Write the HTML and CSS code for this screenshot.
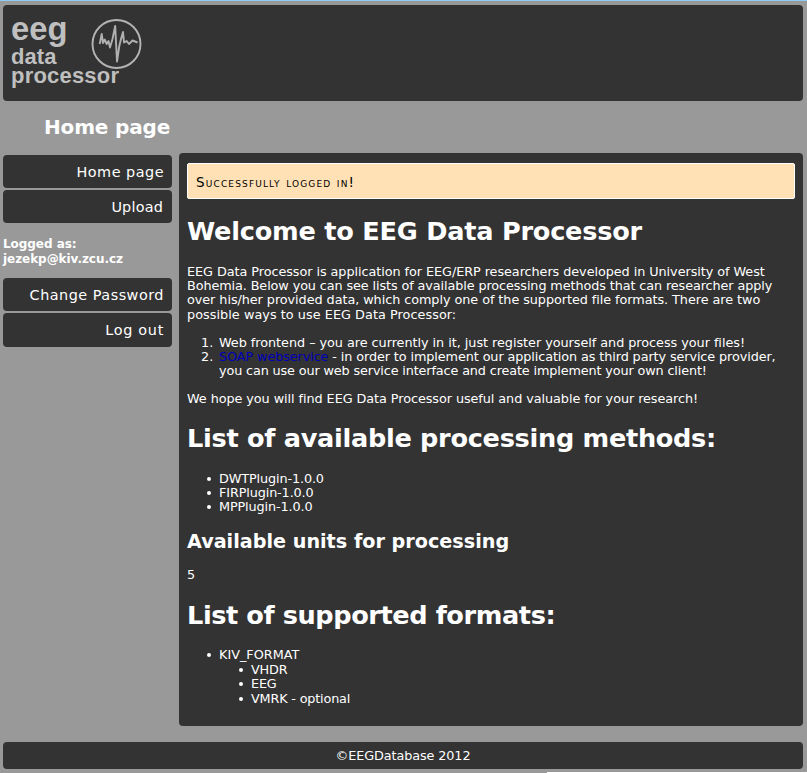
FILE: index.html
```html
<!DOCTYPE html>
<html lang="en">
<head>
<meta charset="utf-8">
<title>Home page</title>
<link rel="stylesheet" href="styles.css">
</head>
<body>
<header class="panel header">
<svg class="logo" width="150" height="96" viewBox="0 0 150 96" role="img" aria-label="eeg data processor">
<g class="logo-text">
<text x="8" y="35" font-size="34" textLength="56.500" lengthAdjust="spacingAndGlyphs">eeg</text>
<text x="8" y="59" font-size="22" textLength="45.500">data</text>
<text x="8" y="77.500" font-size="22" textLength="108">processor</text>
</g>
<circle cx="113.500" cy="39" r="24" fill="none" stroke="#b4b4b4" stroke-width="1.900"/>
<path d="M96.700 39L98.700 29L100 38L101.700 34.500L103.700 39L105.500 36L107 42.500L109.500 34L112.200 21L114 56.500L116.300 41L118 34L120 27L121 37.500L123.700 36L126 39L129.500 35.500L134.500 37.500" fill="none" stroke="#b0b0b0" stroke-width="1.900" stroke-linejoin="round"/>
</svg>
</header>
<h2 class="title">Home page</h2>
<div class="columns">
<aside class="side">
<nav class="menu">
<a class="panel item home">Home page</a>
<a class="panel item upload">Upload</a>
</nav>
<p class="user">Logged as:<br>jezekp@kiv.zcu.cz</p>
<nav class="menu">
<a class="panel item change">Change Password</a>
<a class="panel item logout">Log out</a>
</nav>
</aside>
<main class="panel main">
<div class="alert">Successfully logged in!</div>
<h1 class="welcome">Welcome to EEG Data Processor</h1>
<p class="intro"><span class="i1">EEG Data Processor is application for EEG/ERP researchers developed in University of West</span><br>
<span class="i2">Bohemia. Below you can see lists of available processing methods that can researcher apply</span><br>
<span class="i3">over his/her provided data, which comply one of the supported file formats. There are two</span><br>
<span class="i4">possible ways to use EEG Data Processor:</span></p>
<ol>
<li><span class="o1">Web frontend – you are currently in it, just register yourself and process your files!</span></li>
<li><span class="o2"><a class="link">SOAP webservice</a> - in order to implement our application as third party service provider,</span><br>
<span class="o3">you can use our web service interface and create implement your own client!</span></li>
</ol>
<p class="hope">We hope you will find EEG Data Processor useful and valuable for your research!</p>
<h1 class="methods">List of available processing methods:</h1>
<ul class="method-list">
<li>DWTPlugin-1.0.0</li>
<li>FIRPlugin-1.0.0</li>
<li>MPPlugin-1.0.0</li>
</ul>
<h2 class="units">Available units for processing</h2>
<p class="count">5</p>
<h1 class="formats">List of supported formats:</h1>
<ul class="format-list">
<li>KIV_FORMAT
<ul>
<li>VHDR</li>
<li>EEG</li>
<li>VMRK - optional</li>
</ul>
</li>
</ul>
</main>
</div>
<footer class="panel footer">©EEGDatabase 2012</footer>
</body>
</html>
```
FILE: styles.css
```css
* { box-sizing: border-box; }
html { height: 773px; overflow: hidden; }
body {
  margin: 0;
  height: 773px;
  padding: 4px 4px 0 3px;
  border-top: 1px solid #8fcdf0;
  background: linear-gradient(#fff, #fff) 547px 772px / 260px 1px no-repeat #999;
  color: #fff;
  font: 12.800px/14.200px "DejaVu Sans", Verdana, sans-serif;
  white-space: nowrap;
  overflow: hidden;
}
h1, h2, p, ul, ol { margin: 0; }
.panel { background: #333; border-radius: 4px; }
.header { height: 96px; }
.logo { display: block; }
.logo-text { fill: #bfbfbf; font-family: "Liberation Sans", Arial, sans-serif; font-weight: bold; }
.title { height: 52px; padding: 12px 0 0 41px; font-size: 20px; line-height: 28px; letter-spacing: -0.150px; }
.columns { display: flex; gap: 7px; height: 573px; }
.side { width: 169px; padding-top: 2px; }
.menu { display: grid; gap: 2px; }
.item { height: 33px; padding-right: 8px; text-align: right; font-size: 14.400px; line-height: 35px; letter-spacing: 0.500px; }
.upload { padding-right: 9px; letter-spacing: 0.200px; }
.logout { height: 34px; letter-spacing: 0.700px; }
.user { height: 55px; padding-top: 14px; font-size: 12px; line-height: 14.500px; font-weight: bold; letter-spacing: -0.050px; }
.main { width: 624px; padding: 10px 8px 0; }
.alert { height: 36px; padding: 0 8px; border: 1px solid #fff; border-radius: 2px; background: #ffe1b5; color: #000; font-size: 13.500px; font-variant: small-caps; line-height: 36.500px; letter-spacing: 1.150px; }
h1 { font-size: 25.600px; line-height: 30px; }
.welcome { margin-top: 17px; letter-spacing: -0.240px; }
.intro { margin-top: 19px; }
.i1, .i3 { letter-spacing: -0.056px; }
.i2 { letter-spacing: -0.100px; }
.i4 { letter-spacing: 0.050px; }
.o1 { letter-spacing: -0.035px; }
.o2 { letter-spacing: -0.097px; }
.o3 { letter-spacing: -0.133px; }
ol, ul { padding-left: 32px; list-style: none; }
ol { margin-top: 14px; counter-reset: step; line-height: 14px; }
ol li { counter-increment: step; }
ol li::before { content: counter(step) "."; display: inline-block; width: 18px; margin-left: -18px; }
ul li::before { content: ""; display: inline-block; width: 4px; height: 4px; margin: 0 8px 2px -12px; border-radius: 50%; background: #fff; }
.link { color: #0000b8; }
.hope { margin-top: 14px; letter-spacing: -0.063px; }
.methods { margin: 17px 0 18.800px; letter-spacing: -0.300px; }
.method-list { line-height: 14px; letter-spacing: -0.120px; }
.units { margin-top: 16px; font-size: 19.200px; line-height: 24px; }
.count { margin-top: 14px; }
.formats { margin: 18px 0; letter-spacing: -0.420px; }
.format-list { line-height: 14.500px; }
.format-list ul { letter-spacing: -0.170px; }
.footer { height: 27px; margin-top: 16px; text-align: center; line-height: 27px; letter-spacing: -0.100px; }
```
